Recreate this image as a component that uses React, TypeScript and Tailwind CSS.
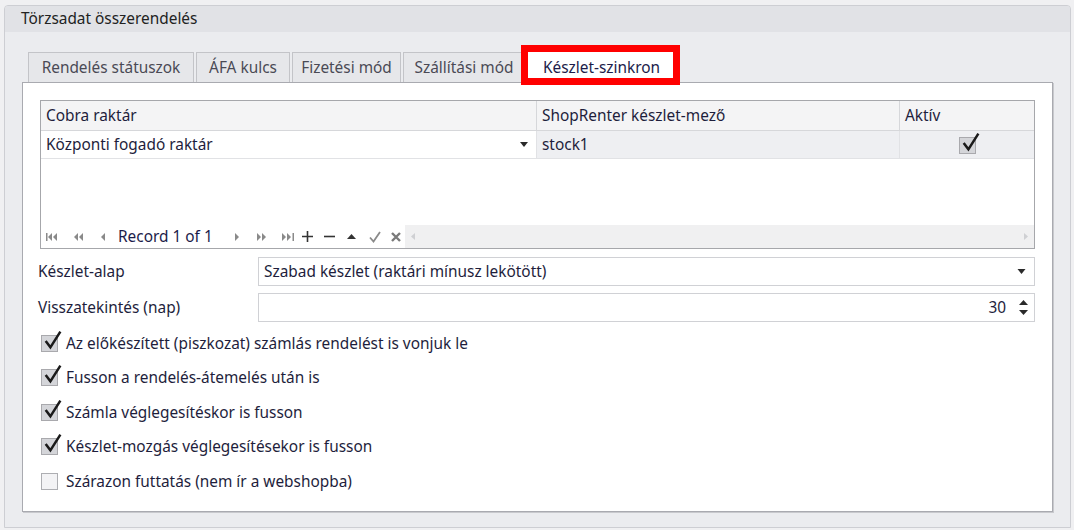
import React from "react";

const FONT = { fontFamily: '"Noto Sans", "Open Sans", Arial, sans-serif' };

function Tick({ className = "" }: { className?: string }) {
  return (
    <svg viewBox="0 0 20 20" className={className}>
      <path d="M3.5 10.5 L8 16.5 L17.5 1.5" fill="none" stroke="#1a1a1a" strokeWidth="2.4" strokeLinejoin="miter" />
    </svg>
  );
}

function CheckBox({ checked }: { checked: boolean }) {
  return (
    <div className="relative w-[17px] h-[17px] shrink-0">
      <div
        className={
          checked
            ? "absolute inset-0 border border-[#a9a9ad] bg-[#d4d5d9]"
            : "absolute inset-0 border border-[#adaeb2] bg-[#f3f3f5]"
        }
      />
      {checked && <Tick className="absolute left-[1px] top-[-5px] w-[21px] h-[21px]" />}
    </div>
  );
}

function Caret({ className = "" }: { className?: string }) {
  return (
    <svg viewBox="0 0 8 5" className={className}>
      <path d="M0 0 H8 L4 5 Z" fill="#2a2a2a" />
    </svg>
  );
}

// Data navigator glyphs
function NavIcon({ kind }: { kind: string }) {
  const c = "#8a8a8a";
  switch (kind) {
    case "first":
      return (
        <svg viewBox="0 0 12 8" className="w-[12px] h-[8px]">
          <rect x="0" y="0" width="1.5" height="8" fill={c} />
          <path d="M6 0 L2 4 L6 8 Z M11 0 L7 4 L11 8 Z" fill={c} />
        </svg>
      );
    case "prevPage":
      return (
        <svg viewBox="0 0 10 8" className="w-[10px] h-[8px]">
          <path d="M5 0 L1 4 L5 8 Z M10 0 L6 4 L10 8 Z" fill={c} />
        </svg>
      );
    case "prev":
      return (
        <svg viewBox="0 0 5 8" className="w-[5px] h-[8px]">
          <path d="M5 0 L1 4 L5 8 Z" fill={c} />
        </svg>
      );
    case "next":
      return (
        <svg viewBox="0 0 5 8" className="w-[5px] h-[8px]">
          <path d="M0 0 L4 4 L0 8 Z" fill={c} />
        </svg>
      );
    case "nextPage":
      return (
        <svg viewBox="0 0 10 8" className="w-[10px] h-[8px]">
          <path d="M0 0 L4 4 L0 8 Z M5 0 L9 4 L5 8 Z" fill={c} />
        </svg>
      );
    case "last":
      return (
        <svg viewBox="0 0 12 8" className="w-[12px] h-[8px]">
          <path d="M0 0 L4 4 L0 8 Z M5 0 L9 4 L5 8 Z" fill={c} />
          <rect x="10.5" y="0" width="1.5" height="8" fill={c} />
        </svg>
      );
    case "add":
      return (
        <svg viewBox="0 0 11 11" className="w-[11px] h-[11px]">
          <path d="M5.5 0 V11 M0 5.5 H11" stroke="#333" strokeWidth="1.6" />
        </svg>
      );
    case "remove":
      return (
        <svg viewBox="0 0 11 11" className="w-[11px] h-[11px]">
          <path d="M0 5.5 H11" stroke="#333" strokeWidth="1.6" />
        </svg>
      );
    case "up":
      return (
        <svg viewBox="0 0 9 5" className="w-[9px] h-[5px]">
          <path d="M0 5 L4.5 0 L9 5 Z" fill="#333" />
        </svg>
      );
    case "ok":
      return (
        <svg viewBox="0 0 12 12" className="w-[12px] h-[12px]">
          <path d="M1 6.5 L4.5 10.5 L11 1" fill="none" stroke="#8a8a8a" strokeWidth="1.8" />
        </svg>
      );
    case "cancel":
      return (
        <svg viewBox="0 0 10 10" className="w-[10px] h-[10px]">
          <path d="M1 1 L9 9 M9 1 L1 9" stroke="#7a7a7a" strokeWidth="2.4" />
        </svg>
      );
    default:
      return null;
  }
}

const tabs = [
  { label: "Rendelés státuszok", w: "w-[166px]" },
  { label: "ÁFA kulcs", w: "w-[94px]" },
  { label: "Fizetési mód", w: "w-[109px]" },
  { label: "Szállítási mód", w: "w-[122px]" },
];

const options = [
  { label: "Az előkészített (piszkozat) számlás rendelést is vonjuk le", checked: true },
  { label: "Fusson a rendelés-átemelés után is", checked: true },
  { label: "Számla véglegesítéskor is fusson", checked: true },
  { label: "Készlet-mozgás véglegesítésekor is fusson", checked: true },
  { label: "Szárazon futtatás (nem ír a webshopba)", checked: false },
];

export default function App() {
  return (
    <div
      className="w-[1074px] h-[530px] bg-[#f0f0f2] pt-[5px] pl-[4px] pr-[3px] pb-[2px] text-[15.4px] text-[#1e1e3c]"
      style={FONT}
    >
      <div className="h-full border border-[#cdced3] rounded-t-[4px] bg-[#ebecef] flex flex-col">
        {/* group caption */}
        <div className="h-[26px] bg-[#e1e2e6] rounded-t-[3px] pl-[16px] flex items-center text-[#222] leading-none">
          Törzsadat összerendelés
        </div>

        <div className="flex-1 flex flex-col pl-[17px] pr-[17px] pt-[20px] pb-[15px]">
          {/* tab strip */}
          <div className="relative h-[30px] flex items-end pl-[6px] gap-[2px]">
            {tabs.map((t) => (
              <div
                key={t.label}
                className={`${t.w} h-[30px] border border-b-0 border-[#c3c4c8] bg-[#e6e7ea] flex items-center justify-center text-[#4a4a55] leading-none`}
              >
                {t.label}
              </div>
            ))}
            <div className="w-[149px] h-[32px] border border-b-0 border-[#c3c4c8] bg-white flex items-center justify-center text-[#1c1c4a] leading-none relative z-10 -mb-[1px]">
              Készlet-szinkron
            </div>
            {/* highlight frame */}
            <div className="absolute left-[499px] top-[-7px] w-[159px] h-[40px] border-[7px] border-[#ff0000] z-20" />
          </div>

          {/* tab page */}
          <div className="flex-1 bg-white border border-[#a9aab0] shadow-[1px_1px_0_#c8c9cd] pt-[17px] pl-[17px] pr-[17px] flex flex-col">
            {/* grid */}
            <div className="h-[149px] border border-[#a6a7ab] flex flex-col">
              <div className="h-[30px] flex bg-[#f4f4f5] border-b border-[#d6d7da]">
                <div className="w-[496px] pl-[5px] flex items-center border-r border-[#d6d7da]">Cobra raktár</div>
                <div className="w-[363px] pl-[5px] flex items-center border-r border-[#d6d7da]">ShopRenter készlet-mező</div>
                <div className="flex-1 pl-[5px] flex items-center">Aktív</div>
              </div>
              <div className="h-[28px] flex border-b border-[#e1e2e5]">
                <div className="w-[496px] pl-[5px] pr-[8px] flex items-center justify-between border-r border-[#e1e2e5] bg-white">
                  <span>Központi fogadó raktár</span>
                  <Caret className="w-[8px] h-[5px]" />
                </div>
                <div className="w-[363px] pl-[5px] flex items-center border-r border-[#e1e2e5] bg-[#eeeff2]">stock1</div>
                <div className="flex-1 flex items-center justify-center bg-[#eeeff2] pt-[2px]">
                  <CheckBox checked />
                </div>
              </div>
              <div className="flex-1" />
              {/* navigator */}
              <div className="h-[23px] flex items-center">
                <div className="flex items-center pl-[5px] w-[364px] leading-none">
                  <span className="w-[27px]"><NavIcon kind="first" /></span>
                  <span className="w-[25px]"><NavIcon kind="prevPage" /></span>
                  <span className="w-[20px] pl-[2px]"><NavIcon kind="prev" /></span>
                  <span className="w-[117px] text-[#1c1c4a]">Record 1 of 1</span>
                  <span className="w-[22px]"><NavIcon kind="next" /></span>
                  <span className="w-[25px]"><NavIcon kind="nextPage" /></span>
                  <span className="w-[20px]"><NavIcon kind="last" /></span>
                  <span className="w-[22px]"><NavIcon kind="add" /></span>
                  <span className="w-[23px]"><NavIcon kind="remove" /></span>
                  <span className="w-[22px]"><NavIcon kind="up" /></span>
                  <span className="w-[22px]"><NavIcon kind="ok" /></span>
                  <span className="w-[12px]"><NavIcon kind="cancel" /></span>
                </div>
                <div className="flex-1 h-full bg-[#f0f0f1] flex items-center justify-between px-[6px]">
                  <svg viewBox="0 0 4 7" className="w-[4px] h-[7px]"><path d="M4 0 L0 3.5 L4 7 Z" fill="#cfd0d3" /></svg>
                  <svg viewBox="0 0 4 7" className="w-[4px] h-[7px]"><path d="M0 0 L4 3.5 L0 7 Z" fill="#cfd0d3" /></svg>
                </div>
              </div>
            </div>

            {/* settings */}
            <div className="mt-[8px] flex items-center h-[29px]">
              <div className="w-[220px] -ml-[2px]">Készlet-alap</div>
              <div className="flex-1 h-full border border-[#d0d1d5] flex items-center justify-between pl-[5px] pr-[8px]">
                <span>Szabad készlet (raktári mínusz lekötött)</span>
                <Caret className="w-[9px] h-[5px]" />
              </div>
            </div>
            <div className="mt-[7px] flex items-center h-[29px]">
              <div className="w-[220px] -ml-[2px]">Visszatekintés (nap)</div>
              <div className="flex-1 h-full border border-[#d0d1d5] flex items-center justify-end pr-[6px]">
                <span className="mr-[13px]">30</span>
                <div className="flex flex-col gap-[5px]">
                  <svg viewBox="0 0 9 5" className="w-[9px] h-[5px]"><path d="M0 5 L4.5 0 L9 5 Z" fill="#2a2a2a" /></svg>
                  <svg viewBox="0 0 9 5" className="w-[9px] h-[5px]"><path d="M0 0 H9 L4.5 5 Z" fill="#2a2a2a" /></svg>
                </div>
              </div>
            </div>

            <div className="mt-[4px] flex flex-col">
              {options.map((o) => (
                <div key={o.label} className="h-[34.5px] flex items-center gap-[8px] pl-[1px]">
                  <CheckBox checked={o.checked} />
                  <span>{o.label}</span>
                </div>
              ))}
            </div>
          </div>
        </div>
      </div>
    </div>
  );
}
